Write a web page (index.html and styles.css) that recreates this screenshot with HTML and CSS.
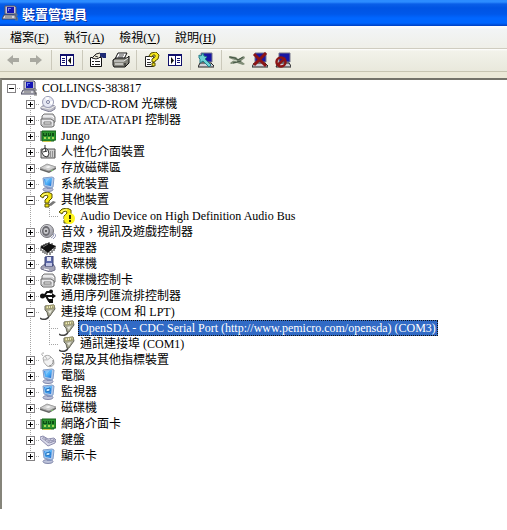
FILE: index.html
```html
<!DOCTYPE html>
<html lang="zh-Hant">

<head>
    <title>裝置管理員</title>
    <meta charset="utf-8" />
    <meta name="viewport" content="width=device-width,initial-scale=1" />
    <link rel="stylesheet" href="styles.css">
</head>

<body>

    <svg class="sprite" aria-hidden="true">
        <defs>
            <linearGradient id="blue" x1="0" y1="0" x2="1" y2="1">
                <stop offset="0" stop-color="#2d86e8" />
                <stop offset="0.5" stop-color="#52b4fa" />
                <stop offset="1" stop-color="#1769d2" />
            </linearGradient>
            <linearGradient id="grey" x1="0" y1="0" x2="1" y2="1">
                <stop offset="0" stop-color="#f6f6f8" />
                <stop offset="1" stop-color="#8e8e98" />
            </linearGradient>
        </defs>
        <symbol id="pc" viewBox="0 0 16 16">
            <path d="M3 1h10l1 1v7h-11z" fill="#c8c8d4" stroke="#55556a" />
            <path d="M5 2h7v6H5z" fill="#1515b5" />
            <path d="M6 3h3v1H7v2H6z" fill="#6c80f0" />
            <path d="M2 10h11l2 4H0z" fill="#d6d6de" stroke="#44445a" />
            <path d="M3 12h7" stroke="#666" />
            <path d="M12 9h3v2h-2v2h3v2h-3" fill="none" stroke="#777" />
        </symbol>
        <symbol id="disc" viewBox="0 0 16 16">
            <path d="M1 11l5-3 9 2v3l-5 3-9-3z" fill="#b9b9c4" stroke="#85859a" />
            <path d="M1 11l9 2 5-3" fill="none" stroke="#eee" />
            <ellipse cx="8" cy="6" rx="5.5" ry="5.5" fill="#e6e8f4" stroke="#9a9cb4" />
            <path d="M8 6L5 1.500l4-.5zM8 6l4 3 1-4z" fill="#fff" />
            <circle cx="8" cy="6" r="1.500" fill="#fff" stroke="#777b9c" />
        </symbol>
        <symbol id="controller" viewBox="0 0 16 16">
            <path d="M4 2h9l2 3v5l-2 1H5L2 8V4z" fill="#d4d4d6" stroke="#777" />
            <path d="M3 4h9l2 2" fill="none" stroke="#fff" />
            <path d="M1 7h10l3 2v5l-2 1H3l-2-2z" fill="#e8e8ea" stroke="#666" />
            <path d="M4 10h7v2H4z" fill="#fff" stroke="#777" />
            <path d="M2 13h10" stroke="#999" />
        </symbol>
        <symbol id="card" viewBox="0 0 16 16">
            <path d="M0 3h2v10H0z" fill="#9a9a9a" />
            <path d="M2 3h14v9h-2v1H2z" fill="#2c952f" stroke="#146319" />
            <path d="M3 5h4v3H3zM8 5h3v3H8zM12 5h2v3h-2z" fill="#0d4f14" />
            <path d="M4 6h2M9 6h1" stroke="#55b94a" />
            <path d="M4 10h2M8 10h2M12 10h2" stroke="#a6d858" stroke-width="2" />
            <path d="M3 13h8v1H3z" fill="#d1c64c" />
        </symbol>
        <symbol id="hid" viewBox="0 0 16 16">
            <path d="M1 5h14v9H1z" fill="#d0d0d0" stroke="#555" />
            <path d="M8 8h7M8 10h7M8 12h7" stroke="#555" stroke-dasharray="1 1" />
            <path d="M2 6l3-2 3 2 1 4-2 3-3-1-2-3z" fill="#fff" stroke="#333" />
            <path d="M5 4V1M3 8l4-1M5 4l1 4" fill="none" stroke="#333" />
        </symbol>
        <symbol id="drive" viewBox="0 0 16 16">
            <path d="M0 8l7-4 9 3v2l-7 4-9-3z" fill="#666" />
            <path d="M0 8l7-4 9 3-7 4z" fill="#cfcfcf" stroke="#a2a2a2" />
            <path d="M5 7l4-1 2 1-3 1z" fill="#f8f8f8" />
            <path d="M11 11l2-1" stroke="#7fd06e" />
        </symbol>
        <symbol id="monitor" viewBox="0 0 16 16">
            <ellipse cx="8" cy="13.500" rx="5" ry="2" fill="#bcc2da" stroke="#8188aa" />
            <path d="M6 10l5-1v4H7z" fill="#8690b8" />
            <path d="M3 2l9-1 2 1-1 9-2 1-7-2z" fill="#b4c9e8" stroke="#7f9cc8" />
            <path d="M4 3l8-1-1 8-6-1z" fill="url(#blue)" />
            <path d="M5 3l5-.5L6 7z" fill="#a8dcff" opacity="0.600" />
        </symbol>
        <symbol id="screen" viewBox="0 0 16 16">
            <use href="#monitor" />
            <path d="M6 5l4-1v3l-4 1z" fill="#cfeeff" stroke="#1a6bbd" />
        </symbol>
        <symbol id="question" viewBox="0 0 16 16">
            <path d="M8 13l5-4 3 1-5 4z" fill="#777" />
            <path d="M0 4l3-3 5-1 4 2v4L9 9v2H5V8l3-3-1-2-3 1-1 2z" fill="#f4e614" stroke="#58520a" />
            <path d="M5 12h4v3H5z" fill="#f4e614" stroke="#58520a" />
            <path d="M2 4l3-2h3" fill="none" stroke="#ffffa0" />
        </symbol>
        <symbol id="warning" viewBox="0 0 16 16">
            <use href="#question" />
            <circle cx="10.500" cy="10.500" r="5.500" fill="#fdf41c" />
            <path d="M10 7h2v4h-2zM10 12h2v2h-2z" fill="#333000" />
        </symbol>
        <symbol id="speaker" viewBox="0 0 16 16">
            <circle cx="7" cy="7" r="6.500" fill="url(#grey)" stroke="#77777c" />
            <ellipse cx="6" cy="7" rx="4" ry="5" fill="#6a6a70" />
            <ellipse cx="6" cy="7" rx="2.500" ry="3" fill="#c4c4c8" />
            <circle cx="6" cy="7" r="1" fill="#444" />
            <path d="M11 14q3-1 3-5M13 15q3-2 3-5" fill="none" stroke="#9296b4" />
        </symbol>
        <symbol id="chip" viewBox="0 0 16 16">
            <path d="M2 5v3M4 4v3M6 3v3M1 8v3M3 10v3M5 11v3M7 12v3M10 12v3M12 10v3M14 8v3M15 6v3M9 2v3M12 3v3" stroke="#222" />
            <path d="M0 7l8-4 8 3-8 7z" fill="#111" />
            <path d="M3 7l5-3" stroke="#777" />
        </symbol>
        <symbol id="floppy" viewBox="0 0 16 16">
            <path d="M1 11l4-3h8l2 3v3l-5 2-9-3z" fill="#a4a4b6" stroke="#74748c" />
            <path d="M5 1l8-1v10H5z" fill="#5c68a8" stroke="#3c4474" />
            <path d="M7 1h4v4H7z" fill="#e2e4f4" />
            <path d="M6 7h6v3H6z" fill="#c0c4e4" />
            <path d="M4 13l5 1" stroke="#fff" />
        </symbol>
        <symbol id="usb" viewBox="0 0 16 16">
            <path d="M1 8h12M4 8l3-4h3M6 8l3 5h2" fill="none" stroke="#111" stroke-width="2" />
            <circle cx="2.500" cy="8" r="2.500" fill="#111" />
            <path d="M12 5l4 3-4 3z" fill="#111" />
            <circle cx="11" cy="3.500" r="2" fill="#111" />
            <path d="M9 11h4v4H9z" fill="#111" />
        </symbol>
        <symbol id="port" viewBox="0 0 16 16">
            <path d="M0 14q3 2 6 1 3-1 3-4" fill="none" stroke="#444" stroke-width="1.500" />
            <path d="M5 2l9-1 1 4-3 4-2 3H8L7 8 5 6z" fill="#a8a894" stroke="#66665a" />
            <path d="M6 2l8-1v3L6 5z" fill="#f2eeb4" stroke="#999568" />
            <path d="M8 3h1M10 3h1M12 3h1" stroke="#555" />
            <path d="M8 7l4-1-2 4z" fill="#e8e8dc" />
        </symbol>
        <symbol id="mouse" viewBox="0 0 16 16">
            <path d="M3 4Q0 1 4 1" fill="none" stroke="#aaa" />
            <path d="M3 6q2-4 7-2 5 3 4 8-2 4-7 2-4-3-4-8z" fill="#f2f2f2" stroke="#aaa" />
            <path d="M4 8q4 1 7-3M7 7L5 4" fill="none" stroke="#b5b5b5" />
            <path d="M9 14q5-1 4-6" fill="none" stroke="#888" />
        </symbol>
        <symbol id="keyboard" viewBox="0 0 16 16">
            <path d="M0 5l3-1 5 3 6-1 2 2-1 3-7 3-8-7z" fill="#d8d8e8" stroke="#8c8cac" />
            <path d="M2 6l7 5 6-2M3 5l6 4 6-1M5 8l2-2M8 11l3-4M11 11l3-4" fill="none" stroke="#9898b4" />
        </symbol>
        <symbol id="arrow" viewBox="0 0 16 16">
            <path d="M2 8l6-5v3h6v4H8v3z" fill="#a9a9a1" />
        </symbol>
        <symbol id="pane" viewBox="0 0 16 16">
            <path d="M1 2h14v12H1z" fill="#10106c" />
            <path d="M2 4h5v9H2zM8 4h6v9H8z" fill="#fff" />
            <path d="M3 6.500h3M3 8.500h3M3 10.500h3" stroke="#10106c" />
            <path d="M12 5v7L9 8.500z" fill="#111" />
        </symbol>
        <symbol id="properties" viewBox="0 0 18 16">
            <path d="M1.500 5.500h11v9h-11z" fill="#fff" stroke="#111" />
            <path d="M3 9.500h2M3 12.500h2M6 9.500h5M6 12.500h5" stroke="#222" />
            <path d="M3 6l4-4 4-1 2 2-3 3-3 1z" fill="#ece9d8" stroke="#222" />
            <path d="M11 1h6v5h-3l-3-2z" fill="#1e2b74" />
            <path d="M6 4l3 1" stroke="#333" />
        </symbol>
        <symbol id="printer" viewBox="0 0 18 16">
            <path d="M6 1h9l-3 6H3z" fill="#fff" stroke="#111" />
            <path d="M7 3h5M6 5h5" stroke="#444" />
            <path d="M1 8l3-2h11l2-2v7l-4 4H2l-1-2z" fill="#85857c" stroke="#111" />
            <path d="M2 9h10l4-3" fill="none" stroke="#eee" />
            <path d="M3 12h8" stroke="#fff" />
            <path d="M13 11v3" stroke="#111" />
        </symbol>
        <symbol id="help" viewBox="0 0 16 16">
            <path d="M1.500 4.500h8v10h-8z" fill="#fff" stroke="#222" />
            <path d="M3 7.500h3M3 10.500h4M3 12.500h4" stroke="#333" />
            <path d="M5 4l2-3 5-1 3 3-1 4-3 2v1H8V7l3-2V3H9L8 5z" fill="#f7e820" stroke="#5a5200" />
            <path d="M8 11h3v3H8z" fill="#f7e820" stroke="#5a5200" />
        </symbol>
        <symbol id="scan" viewBox="0 0 16 16">
            <path d="M3 1h11v9H3z" fill="#1717a4" stroke="#77778a" />
            <path d="M2 11h11l3 3v1H0z" fill="#d0d0d8" stroke="#222" />
            <path d="M1 3l2 1 2-3 1 3 3 1-2 2 6 6-2 2-6-6-3 2V7L1 6z" fill="#6fd2d4" stroke="#257c88" />
        </symbol>
        <symbol id="update" viewBox="0 0 18 16">
            <path d="M1 4l7 1 2 2 6-3 1 2-4 3 4 3-2 1-6-2-6 1-1-1 4-3-5-2z" fill="#7f8c76" />
            <path d="M2 5l5 1 3 2M10 8l5-3M5 11l8-2" fill="none" stroke="#425443" />
            <path d="M5 8l4 1" stroke="#d8dfcf" />
        </symbol>
        <symbol id="remove" viewBox="0 0 16 16">
            <path d="M3 1h11v9H3z" fill="#1717a4" stroke="#77778a" />
            <path d="M2 11h11l3 3v1H0z" fill="#d0d0d8" stroke="#222" />
            <path d="M2 2l12 12M14 1L2 13" stroke="#8c1515" stroke-width="3" />
        </symbol>
        <symbol id="disable" viewBox="0 0 16 16">
            <path d="M4 1h11v9H4z" fill="#1717a4" stroke="#77778a" />
            <path d="M3 11h11l2 3v1H1z" fill="#d0d0d8" stroke="#222" />
            <circle cx="6" cy="10" r="4.500" fill="none" stroke="#8c1515" stroke-width="2.500" />
            <path d="M3 13l7-7" stroke="#8c1515" stroke-width="2.500" />
        </symbol>
    </svg>

    <div class="window">
        <div class="titleBar">
            <svg class="icon"><use href="#pc" /></svg>
            <span>裝置管理員</span>
        </div>

        <div class="menuBar">
            <button type="button">檔案(<u>F</u>)</button>
            <button type="button">執行(<u>A</u>)</button>
            <button type="button">檢視(<u>V</u>)</button>
            <button type="button">說明(<u>H</u>)</button>
        </div>

        <div class="toolBar">
            <div class="group">
                <button type="button" aria-label="上一頁" disabled><svg class="icon"><use href="#arrow" /></svg></button>
                <button type="button" aria-label="下一頁" disabled><svg class="icon flip"><use href="#arrow" /></svg></button>
            </div>
            <div class="group">
                <button type="button" aria-label="顯示主控台樹狀目錄"><svg class="icon"><use href="#pane" /></svg></button>
            </div>
            <div class="group">
                <button type="button" aria-label="內容"><svg class="icon wide"><use href="#properties" /></svg></button>
                <button type="button" aria-label="列印"><svg class="icon wide"><use href="#printer" /></svg></button>
            </div>
            <div class="group">
                <button type="button" aria-label="說明"><svg class="icon"><use href="#help" /></svg></button>
                <button type="button" aria-label="執行窗格"><svg class="icon flip"><use href="#pane" /></svg></button>
            </div>
            <div class="group">
                <button type="button" aria-label="掃描硬體變更"><svg class="icon"><use href="#scan" /></svg></button>
            </div>
            <div class="group">
                <button type="button" aria-label="更新驅動程式"><svg class="icon wide"><use href="#update" /></svg></button>
                <button type="button" aria-label="解除安裝"><svg class="icon"><use href="#remove" /></svg></button>
                <button type="button" aria-label="停用"><svg class="icon"><use href="#disable" /></svg></button>
            </div>
        </div>

        <div class="content">
            <ul class="tree">
                <li>
                    <div class="row"><button class="toggle open" type="button" aria-label="摺疊"></button><svg class="icon"><use href="#pc" /></svg><span class="label">COLLINGS-383817</span></div>
                    <ul>
                        <li><div class="row"><button class="toggle" type="button" aria-label="展開"></button><svg class="icon"><use href="#disc" /></svg><span class="label">DVD/CD-ROM 光碟機</span></div></li>
                        <li><div class="row"><button class="toggle" type="button" aria-label="展開"></button><svg class="icon"><use href="#controller" /></svg><span class="label">IDE ATA/ATAPI 控制器</span></div></li>
                        <li><div class="row"><button class="toggle" type="button" aria-label="展開"></button><svg class="icon"><use href="#card" /></svg><span class="label">Jungo</span></div></li>
                        <li><div class="row"><button class="toggle" type="button" aria-label="展開"></button><svg class="icon"><use href="#hid" /></svg><span class="label">人性化介面裝置</span></div></li>
                        <li><div class="row"><button class="toggle" type="button" aria-label="展開"></button><svg class="icon"><use href="#drive" /></svg><span class="label">存放磁碟區</span></div></li>
                        <li><div class="row"><button class="toggle" type="button" aria-label="展開"></button><svg class="icon"><use href="#monitor" /></svg><span class="label">系統裝置</span></div></li>
                        <li>
                            <div class="row"><button class="toggle open" type="button" aria-label="摺疊"></button><svg class="icon"><use href="#question" /></svg><span class="label">其他裝置</span></div>
                            <ul>
                                <li><div class="row leaf"><svg class="icon"><use href="#warning" /></svg><span class="label">Audio Device on High Definition Audio Bus</span></div></li>
                            </ul>
                        </li>
                        <li><div class="row"><button class="toggle" type="button" aria-label="展開"></button><svg class="icon"><use href="#speaker" /></svg><span class="label">音效，視訊及遊戲控制器</span></div></li>
                        <li><div class="row"><button class="toggle" type="button" aria-label="展開"></button><svg class="icon"><use href="#chip" /></svg><span class="label">處理器</span></div></li>
                        <li><div class="row"><button class="toggle" type="button" aria-label="展開"></button><svg class="icon"><use href="#floppy" /></svg><span class="label">軟碟機</span></div></li>
                        <li><div class="row"><button class="toggle" type="button" aria-label="展開"></button><svg class="icon"><use href="#controller" /></svg><span class="label">軟碟機控制卡</span></div></li>
                        <li><div class="row"><button class="toggle" type="button" aria-label="展開"></button><svg class="icon"><use href="#usb" /></svg><span class="label">通用序列匯流排控制器</span></div></li>
                        <li>
                            <div class="row"><button class="toggle open" type="button" aria-label="摺疊"></button><svg class="icon"><use href="#port" /></svg><span class="label">連接埠 (COM 和 LPT)</span></div>
                            <ul>
                                <li><div class="row leaf"><svg class="icon"><use href="#port" /></svg><span class="label selected">OpenSDA - CDC Serial Port (http://www.pemicro.com/opensda) (COM3)</span></div></li>
                                <li><div class="row leaf"><svg class="icon"><use href="#port" /></svg><span class="label">通訊連接埠 (COM1)</span></div></li>
                            </ul>
                        </li>
                        <li><div class="row"><button class="toggle" type="button" aria-label="展開"></button><svg class="icon"><use href="#mouse" /></svg><span class="label">滑鼠及其他指標裝置</span></div></li>
                        <li><div class="row"><button class="toggle" type="button" aria-label="展開"></button><svg class="icon"><use href="#monitor" /></svg><span class="label">電腦</span></div></li>
                        <li><div class="row"><button class="toggle" type="button" aria-label="展開"></button><svg class="icon"><use href="#screen" /></svg><span class="label">監視器</span></div></li>
                        <li><div class="row"><button class="toggle" type="button" aria-label="展開"></button><svg class="icon"><use href="#drive" /></svg><span class="label">磁碟機</span></div></li>
                        <li><div class="row"><button class="toggle" type="button" aria-label="展開"></button><svg class="icon"><use href="#card" /></svg><span class="label">網路介面卡</span></div></li>
                        <li><div class="row"><button class="toggle" type="button" aria-label="展開"></button><svg class="icon"><use href="#keyboard" /></svg><span class="label">鍵盤</span></div></li>
                        <li><div class="row"><button class="toggle" type="button" aria-label="展開"></button><svg class="icon"><use href="#screen" /></svg><span class="label">顯示卡</span></div></li>
                    </ul>
                </li>
            </ul>
        </div>
    </div>

</body>

</html>
```
FILE: styles.css
```css
body {
    margin: 0;
    background-color: #fff;
    color: #000;
    font-family: "Liberation Serif", "Noto Sans CJK TC", serif;
    font-size: 12px;
}

button {
    margin: 0;
    padding: 0;
    border: none;
    background: none;
    color: inherit;
    font: inherit;
}

.sprite {
    display: block;
    width: 0;
    height: 0;
}

.icon {
    display: block;
    flex: none;
    width: 16px;
    height: 16px;
}

.icon.wide {
    width: 18px;
    margin: 0 -1px;
}

.icon.flip {
    transform: scaleX(-1);
}

.window {
    display: flex;
    flex-direction: column;
    min-height: calc(100vh - 21px);
}

.titleBar {
    display: flex;
    align-items: center;
    gap: 4px;
    height: 26px;
    padding-left: 2px;
    box-sizing: border-box;
    background: linear-gradient(#2c8cff 0, #2c8cff 2px, #0a5fe8 4px, #0054e3 8px, #0058ea 14px, #0066ff 18px, #0066ff 23px, #003fc0 26px);
    color: #fff;
    font-weight: bold;
    font-size: 13px;
    text-shadow: 1px 1px #0b2f9c;
}

.menuBar {
    display: flex;
    align-items: center;
    gap: 15px;
    height: 22px;
    padding-left: 10px;
    background: linear-gradient(#fff 0, #f2f4f5 4px, #efefe8 100%);
    border-bottom: 1px solid #cfccc0;
}

.toolBar {
    display: flex;
    align-items: center;
    height: 22px;
    border-bottom: 1px solid #c8c5b2;
    background: linear-gradient(#fff 0, #f2f2ea 2px, #e9e8dc 100%);
}

.toolBar .group {
    display: flex;
    align-items: center;
    gap: 7px;
    height: 20px;
    padding: 0 7px;
    border-right: 1px solid #cbc9bb;
}

.toolBar .group:first-child {
    padding-left: 5px;
}

.toolBar .group:last-child {
    border-right: none;
}

.content {
    flex: 1;
    margin-top: 6px;
    border-top: 2px solid #75736a;
    border-left: 2px solid #85847a;
    background-color: #fff;
    box-shadow: 0 -6px #ece9d8;
}

.tree,
.tree ul {
    margin: 0;
    padding: 0;
    list-style: none;
}

.tree {
    padding-left: 5px;
}

.tree ul {
    padding-left: 19px;
}

/* dotted guide that runs down through the toggles */
.tree ul li {
    background: repeating-linear-gradient(#a5a5a5 0, #a5a5a5 1px, transparent 1px, transparent 2px) 4px 0 / 1px 100% no-repeat;
}

.tree ul li:last-child {
    background-size: 1px 9px;
}

.row {
    display: flex;
    align-items: center;
    height: 16px;
    background: repeating-linear-gradient(90deg, #a5a5a5 0, #a5a5a5 1px, transparent 1px, transparent 2px) 4px 8px / 10px 1px no-repeat;
}

.row.leaf {
    padding-left: 14px;
}

.toggle {
    flex: none;
    width: 9px;
    height: 9px;
    margin-right: 5px;
    border: 1px solid #848284;
    background:
        linear-gradient(#000, #000) 1px 3px / 5px 1px no-repeat,
        linear-gradient(#000, #000) 3px 1px / 1px 5px no-repeat,
        #fff;
}

.toggle.open {
    background: linear-gradient(#000, #000) 1px 3px / 5px 1px no-repeat, #fff;
}

.label {
    margin-left: 3px;
    padding: 0 2px;
    line-height: 16px;
    white-space: nowrap;
}

.label.selected {
    background-color: #316ac5;
    color: #fff;
    outline: 1px dotted #111;
    outline-offset: -1px;
}
```
